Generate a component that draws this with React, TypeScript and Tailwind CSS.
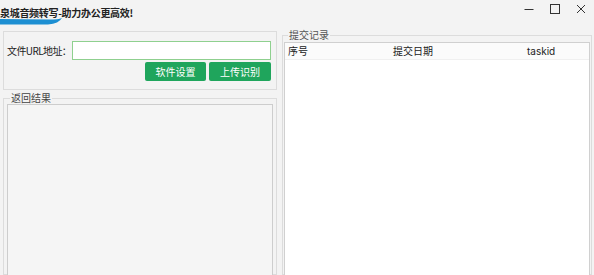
export default function App() {
    return (
        <div className="w-[594px] h-[275px] overflow-hidden bg-[#f3f3f3] flex flex-col text-[#222] font-['Noto_Sans_CJK_SC','Noto_Sans',sans-serif]">
            {/* Title bar */}
            <div className="relative h-[29px] flex items-start justify-between shrink-0">
                <div className="pt-[7px] text-[10px] leading-[12px] font-bold tracking-[-0.3px]">泉城音频转写-助力办公更高效!</div>
                {/* blue swoosh under title */}
                <svg className="absolute left-0 top-[17px]" width="64" height="9" viewBox="0 0 64 9">
                    <path d="M0 2 L50 2.5 Q58 2.5 62 1 Q59 6.5 48 7.5 L0 7.5 Z" fill="#1d8fd2" />
                </svg>
                <div className="flex items-center gap-[16px] pr-[8px] pt-[4px]">
                    <svg width="10" height="10" viewBox="0 0 10 10">
                        <path d="M0.5 5.5 H9.5" stroke="#333" strokeWidth="1" />
                    </svg>
                    <svg width="10" height="10" viewBox="0 0 10 10">
                        <rect x="0.5" y="0.5" width="9" height="9" fill="none" stroke="#333" strokeWidth="1" />
                    </svg>
                    <svg width="10" height="10" viewBox="0 0 10 10">
                        <path d="M1 1 L9 9 M9 1 L1 9" stroke="#333" strokeWidth="1" />
                    </svg>
                </div>
            </div>

            {/* Body */}
            <div className="flex flex-1 min-h-0 pl-[3px] pr-[2px] gap-[5px]">
                {/* Left column */}
                <div className="w-[274px] flex flex-col gap-[2px]">
                    <div className="mt-[2px] border border-[#dcdcdc] pl-[3px] pr-[5px] pt-[9px] pb-[8px] flex flex-col gap-[2px]">
                        <div className="flex items-center">
                            <span className="w-[65px] shrink-0 whitespace-nowrap text-[10px] leading-[12px] tracking-[-0.6px]">文件URL地址：</span>
                            <div className="flex-1 h-[19px] bg-white border border-[#8fd08f]" />
                        </div>
                        <div className="flex justify-end gap-[3px]">
                            <button className="w-[61px] h-[19px] rounded-[2px] bg-[#1fa55c] text-white text-[10px] leading-[12px]">软件设置</button>
                            <button className="w-[62px] h-[19px] rounded-[2px] bg-[#1fa55c] text-white text-[10px] leading-[12px]">上传识别</button>
                        </div>
                    </div>
                    <fieldset className="flex-1 min-h-0 border border-[#dcdcdc] px-[3px] flex flex-col">
                        <legend className="ml-[3px] text-[10px] leading-[12px] text-[#444] px-[1px]">返回结果</legend>
                        <div className="flex-1 bg-[#f5f5f5] border border-[#cdcdcd] min-h-[200px]" />
                    </fieldset>
                </div>

                {/* Right column */}
                <fieldset className="flex-1 min-w-0 border border-[#dcdcdc] px-[1px] flex flex-col">
                    <legend className="ml-[4px] text-[10px] leading-[12px] text-[#555] px-[1px]">提交记录</legend>
                    <div className="mt-[1px] flex-1 bg-white border border-[#d0d0d0] min-h-[240px]">
                        <div className="h-[17px] flex items-center bg-[#fbfbfb] border-b border-[#f0f0f0] text-[10px] leading-[12px] pl-[3px]">
                            <span className="w-[105px]">序号</span>
                            <span className="w-[134px]">提交日期</span>
                            <span className="font-['Inter',sans-serif]">taskid</span>
                        </div>
                    </div>
                </fieldset>
            </div>
        </div>
    );
}
